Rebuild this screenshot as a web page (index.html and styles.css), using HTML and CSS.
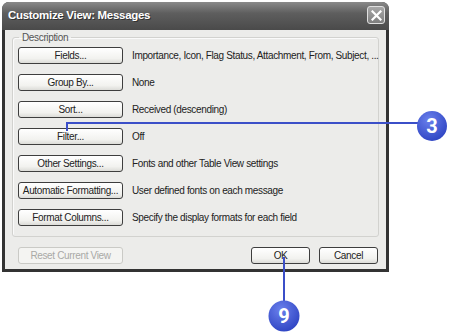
FILE: index.html
```html
<!DOCTYPE html>
<html lang="en">
<head>
  <meta charset="UTF-8" />
  <title>Customize View: Messages</title>
  <link rel="stylesheet" href="styles.css">
</head>
<body>
  <!-- Dialog window -->
  <div class="dialog">
    <div class="title-bar">
      <span class="title">Customize View: Messages</span>
      <span class="close-btn">
        <svg width="11" height="11" viewBox="0 0 11 11">
          <path d="M1.5 1.5 L9.5 9.5 M9.5 1.5 L1.5 9.5" stroke="#fff" stroke-width="2.2" stroke-linecap="square" />
        </svg>
      </span>
    </div>

    <div class="dialog-body">
      <fieldset class="group">
        <legend>Description</legend>
        <div class="rows">
          <button class="btn">Fields...</button>
          <span class="desc">Importance, Icon, Flag Status, Attachment, From, Subject, ...</span>
          <button class="btn">Group By...</button>
          <span class="desc">None</span>
          <button class="btn">Sort...</button>
          <span class="desc">Received (descending)</span>
          <button class="btn">Filter...</button>
          <span class="desc">Off</span>
          <button class="btn">Other Settings...</button>
          <span class="desc">Fonts and other Table View settings</span>
          <button class="btn">Automatic Formatting...</button>
          <span class="desc">User defined fonts on each message</span>
          <button class="btn">Format Columns...</button>
          <span class="desc">Specify the display formats for each field</span>
        </div>
      </fieldset>

      <div class="footer">
        <button class="btn disabled">Reset Current View</button>
        <div class="footer-right">
          <button class="btn small">OK</button>
          <button class="btn small">Cancel</button>
        </div>
      </div>
    </div>
  </div>

  <!-- Step callouts -->
  <svg class="callouts" width="450" height="334" viewBox="0 0 450 334">
    <defs>
      <radialGradient id="badge" cx="40%" cy="30%" r="75%">
        <stop offset="0" stop-color="#6a80ec" />
        <stop offset="1" stop-color="#2d43c2" />
      </radialGradient>
    </defs>
    <path d="M67 131 V123 H420" fill="none" stroke="#3b4fc8" stroke-width="2" />
    <circle cx="432" cy="126" r="15" fill="url(#badge)" />
    <text x="432" y="133" class="badge-num">3</text>

    <path d="M284 257 V302" fill="none" stroke="#3b4fc8" stroke-width="2" />
    <circle cx="284" cy="316" r="15.5" fill="url(#badge)" />
    <text x="284" y="323" class="badge-num">9</text>
  </svg>
</body>
</html>
```

FILE: styles.css
```css
* {
  margin: 0;
  padding: 0;
  box-sizing: border-box;
}

body {
  background: #fff;
  font-family: 'Liberation Sans', Arial, sans-serif;
  font-size: 10px;
  letter-spacing: -0.35px;
  color: #222;
  position: relative;
  width: 450px;
  height: 334px;
  overflow: hidden;
}

/* Window frame */
.dialog {
  margin: 2px 0 0 2px;
  width: 387px;
  height: 270px;
  background: #333;
  border-radius: 7px 7px 0 0;
  padding: 0 3px 3px;
  display: flex;
  flex-direction: column;
}

.title-bar {
  height: 28px;
  margin: 0 -3px;
  border-radius: 7px 7px 0 0;
  background: linear-gradient(#8a8a8a, #5e5e5e 40%, #4a4a4a);
  display: flex;
  align-items: center;
  justify-content: space-between;
  padding: 0 4px 2px 6px;
}

.title {
  color: #fff;
  font-weight: bold;
  font-size: 11.5px;
  letter-spacing: -0.3px;
  text-shadow: 1px 1px 0 #333;
}

.close-btn {
  width: 18px;
  height: 18px;
  border: 1px solid #e0e0e0;
  border-radius: 3px;
  background: linear-gradient(#a8a8a8, #7e7e7e);
  display: flex;
  align-items: center;
  justify-content: center;
}

.dialog-body {
  flex: 1;
  background: #ececea;
  padding: 1px 7px 0 7px;
  display: flex;
  flex-direction: column;
}

/* Description group box */
.group {
  min-width: 0;
  border: 1px solid #d2d2cf;
  border-radius: 3px;
  box-shadow: inset 1px 1px 0 #fafafa;
  padding: 3px 5px 7px 5px;
  height: 206px;
}

.group legend {
  color: #555;
  padding: 0 3px;
  margin-left: 1px;
  line-height: 13px;
}

.rows {
  display: grid;
  grid-template-columns: 105px 1fr;
  grid-auto-rows: 17px;
  row-gap: 10px;
  column-gap: 9px;
  align-items: center;
}

.btn {
  font-family: inherit;
  font-size: 10px;
  letter-spacing: -0.35px;
  color: #222;
  height: 17px;
  width: 105px;
  border: 1px solid #3e3e3e;
  border-radius: 3px;
  background: linear-gradient(#ffffff, #f2f2ef 70%, #dcdcd8);
  white-space: nowrap;
  overflow: hidden;
}

.btn.small {
  width: 59px;
}

.btn.disabled {
  color: #a9a9a6;
  border-color: #cacac6;
  background: #f4f4f2;
}

.desc {
  white-space: nowrap;
  color: #222;
}

/* Bottom buttons */
.footer {
  display: flex;
  justify-content: space-between;
  align-items: center;
  padding: 10px 1px 0 6px;
}

.footer-right {
  display: flex;
  gap: 9px;
}

/* Step callouts */
.callouts {
  position: absolute;
  top: 0;
  left: 0;
  pointer-events: none;
}

.badge-num {
  fill: #fff;
  font-family: Roboto, 'Liberation Sans', sans-serif;
  font-weight: bold;
  font-size: 20px;
  letter-spacing: 0;
  text-anchor: middle;
}
```
